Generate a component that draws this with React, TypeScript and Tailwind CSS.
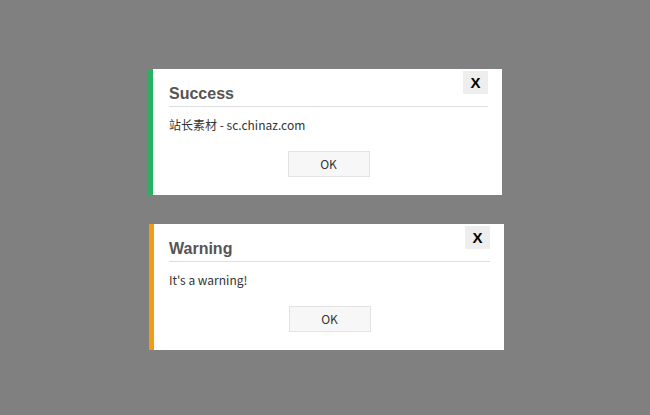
import React from 'react';

const dialogs = [
  { title: 'Success', text: '站长素材 - sc.chinaz.com', color: 'border-[#2ab062]', box: 'ml-[148px] w-[354px] pl-[16px]' },
  { title: 'Warning', text: "It's a warning!", color: 'border-[#f39c12]', box: 'ml-[149px] w-[355px] pl-[15px]' },
];

const App: React.FC = () => {
  return (
    <div className="w-[650px] h-[415px] bg-[#808080] flex flex-col pt-[69px] gap-[29px]">
      {dialogs.map((d) => (
        <div
          key={d.title}
          className={`relative h-[126px] bg-white border-l-[5px] ${d.color} ${d.box} pr-[14px] pt-[13px]`}
        >
          <button className="absolute top-[2px] right-[14px] w-[25px] h-[23px] bg-[#eeeeee] text-black text-[15px] font-bold leading-[23px] font-['Liberation_Sans',Arial,sans-serif]">
            X
          </button>
          <div className="h-[25px] leading-[24px] border-b border-[#dddddd] text-[16px] font-bold text-[#555555] font-['Liberation_Sans',Arial,sans-serif]">
            {d.title}
          </div>
          <div className="mt-[8px] leading-[20px] text-[12px] text-[#333333] font-['Noto_Sans_CJK_SC',sans-serif]">
            {d.text}
          </div>
          <div className="mt-[16px] flex justify-center">
            <button className="w-[82px] h-[26px] bg-[#f7f7f7] border border-[#e3e3e3] text-[12px] text-[#333333] font-['Noto_Sans_CJK_SC',sans-serif]">
              OK
            </button>
          </div>
        </div>
      ))}
    </div>
  );
};

export default App;
